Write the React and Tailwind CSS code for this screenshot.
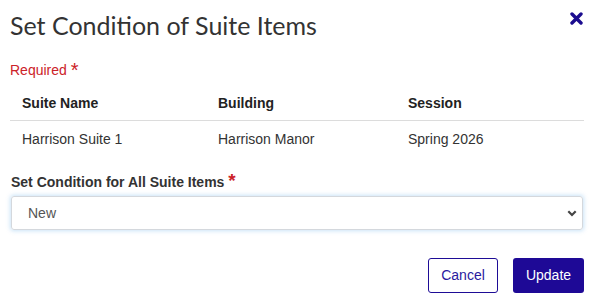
import React from "react";

export default function App() {
  return (
    <div className="w-[594px] h-[304px] bg-white overflow-hidden" style={{ fontFamily: '"Liberation Sans", Arial, sans-serif' }}>
      <div className="flex items-start justify-between pl-[10px] pr-[11px] pt-[10px]">
        <h1 className="text-[25px] leading-[30px] text-[#333333]" style={{ fontFamily: 'Lato, sans-serif' }}>Set Condition of Suite Items</h1>
        <svg className="mt-[2px]" width="13" height="13" viewBox="0 0 13 13">
          <path d="M2 2 L11 11 M11 2 L2 11" stroke="#1b0c8f" strokeWidth="3.4" strokeLinecap="round" />
        </svg>
      </div>
      <div className="pl-[10px] pr-[10px]">
        <div className="mt-[22px] text-[14px] leading-[16px] text-[#cc2229]">
          Required <span className="text-[20px] leading-[10px] align-[-2px]">*</span>
        </div>
        <table className="w-full mt-[10px] text-[14px] text-[#333]">
          <thead>
            <tr className="border-b border-[#dcdcdc]">
              <th className="text-left font-bold text-[14px] pl-[12px] h-[32px] w-[196px] text-[#222]">Suite Name</th>
              <th className="text-left font-bold text-[14px] pl-[12px] h-[32px] w-[190px] text-[#222]">Building</th>
              <th className="text-left font-bold text-[14px] pl-[12px] h-[32px] text-[#222]">Session</th>
            </tr>
          </thead>
          <tbody>
            <tr>
              <td className="pl-[12px] h-[38px] text-[#333]">Harrison Suite 1</td>
              <td className="pl-[12px] h-[38px] text-[#333]">Harrison Manor</td>
              <td className="pl-[12px] h-[38px] text-[#333]">Spring 2026</td>
            </tr>
          </tbody>
        </table>
        <div className="mt-[16px] pl-[1px] text-[14px] leading-[16px] font-bold text-[#333]">
          Set Condition for All Suite Items <span className="text-[#cc2229] text-[19px] leading-[10px]">*</span>
        </div>
        <div className="mt-[6px] ml-[1px] mr-[1px] h-[34px] rounded-[3px] border border-[#d4d8dd] shadow-[0_0_4px_1px_rgba(102,175,233,0.35)] flex items-center justify-between pl-[16px] pr-[5px]">
          <span className="text-[14px] text-[#555]">New</span>
          <svg width="10" height="7" viewBox="0 0 10 7"><path d="M1.3 1.3 L5 5 L8.7 1.3" stroke="#444" strokeWidth="2.2" fill="none" /></svg>
        </div>
        <div className="flex justify-end gap-[15px] mt-[28px]">
          <button className="w-[70px] h-[35px] rounded-[3px] border border-[#1e0c96] text-[#2a1aa0] text-[14px]">Cancel</button>
          <button className="w-[71px] h-[35px] rounded-[3px] bg-[#1e0996] text-white text-[14px]">Update</button>
        </div>
      </div>
    </div>
  );
}
